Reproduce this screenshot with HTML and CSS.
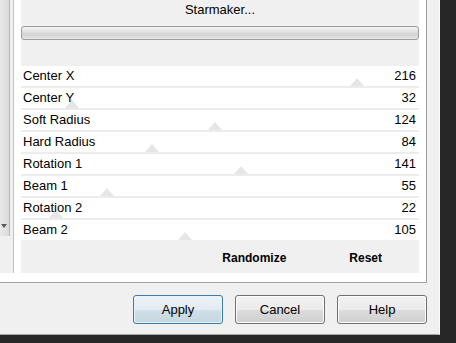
FILE: index.html
```html
<!DOCTYPE html>
<html lang="en">
<head>
    <meta charset="UTF-8">
    <meta name="viewport" content="width=device-width, initial-scale=1.0">
    <title>Starmaker</title>
    <link rel="stylesheet" href="styles.css">
</head>
<body>
    <div class="dialog">
        <div class="group">
            <div class="side">
                <div class="scrollbar"><span class="arrow"></span></div>
            </div>
            <div class="panel">
                <div class="head">
                    <div class="title">Starmaker...</div>
                    <div class="bar"></div>
                </div>
                <ul class="rows">
                    <li class="row" style="--v: 216"><span>Center X</span><span>216</span><i class="thumb"></i></li>
                    <li class="row" style="--v: 32"><span>Center Y</span><span>32</span><i class="thumb"></i></li>
                    <li class="row" style="--v: 124"><span>Soft Radius</span><span>124</span><i class="thumb"></i></li>
                    <li class="row" style="--v: 84"><span>Hard Radius</span><span>84</span><i class="thumb"></i></li>
                    <li class="row" style="--v: 141"><span>Rotation 1</span><span>141</span><i class="thumb"></i></li>
                    <li class="row" style="--v: 55"><span>Beam 1</span><span>55</span><i class="thumb"></i></li>
                    <li class="row" style="--v: 22"><span>Rotation 2</span><span>22</span><i class="thumb"></i></li>
                    <li class="row" style="--v: 105"><span>Beam 2</span><span>105</span><i class="thumb"></i></li>
                </ul>
                <div class="tools">
                    <span>Randomize</span>
                    <span>Reset</span>
                </div>
            </div>
        </div>
        <div class="buttons">
            <button class="btn default">Apply</button>
            <button class="btn">Cancel</button>
            <button class="btn">Help</button>
        </div>
    </div>
</body>
</html>
```

FILE: styles.css
```css
body {
    margin: 0;
    padding: 0;
    background-color: #272727;
    font-family: "Liberation Sans", Arial, sans-serif;
    font-size: 13px;
    color: #000;
}
.dialog {
    width: 439px;
    height: 334px;
    background: #f0f0f0;
    border-right: 1px solid #fafafa;
    border-bottom: 1px solid #a8a8a8;
}
.group {
    display: flex;
    width: 426px;
    height: 273px;
    padding-bottom: 9px;
    background: #fff;
    border-right: 1px solid #a0a0a0;
    border-bottom: 1px solid #a0a0a0;
}
.side {
    width: 13px;
    height: 273px;
    background: #f0f0f0;
    border-right: 1px solid #c2c2c2;
}
.scrollbar {
    position: relative;
    width: 9px;
    height: 236px;
    background: linear-gradient(to right, #e9e9e9, #dadada);
    border-right: 1px solid #b8b8b8;
}
.arrow {
    position: absolute;
    left: 1px;
    bottom: 8px;
    width: 0;
    height: 0;
    border-left: 3px solid transparent;
    border-right: 3px solid transparent;
    border-top: 4px solid #5a5a5a;
}
.panel {
    width: 398px;
    margin-left: 7px;
    display: flex;
    flex-direction: column;
}
.head {
    height: 66px;
    background: #f0f0f0;
}
.title {
    line-height: 20px;
    text-align: center;
}
.bar {
    box-sizing: border-box;
    height: 14px;
    margin-top: 6px;
    border: 1px solid #9c9c9c;
    border-radius: 3px;
    background: linear-gradient(#f4f4f4, #dedede 45%, #d2d2d2 60%, #e6e6e6);
}
.rows {
    list-style: none;
    margin: 0;
    padding: 0;
    display: flex;
    flex-direction: column;
    gap: 2px;
    background: #ececec;
}
.row {
    position: relative;
    height: 20px;
    line-height: 20px;
    padding: 0 3px 0 2px;
    display: flex;
    justify-content: space-between;
    background: #fff;
}
.row span {
    position: relative;
    z-index: 1;
}
.thumb {
    position: absolute;
    bottom: 0;
    left: calc(1px + var(--v) / 255 * 396px - 7px);
    width: 0;
    height: 0;
    border-left: 7px solid transparent;
    border-right: 7px solid transparent;
    border-bottom: 8px solid #e6e6e6;
}
.tools {
    height: 33px;
    background: #f0f0f0;
    display: flex;
    justify-content: flex-end;
    align-items: center;
    gap: 63px;
    padding: 2px 37px 0 0;
    box-sizing: border-box;
    font-size: 12px;
    font-weight: bold;
}
.buttons {
    display: flex;
    justify-content: flex-end;
    gap: 12px;
    padding: 12px 12px 0 0;
}
.btn {
    width: 90px;
    height: 29px;
    padding: 0;
    font-family: "Liberation Sans", Arial, sans-serif;
    font-size: 13px;
    color: #000;
    border: 1px solid #707070;
    border-radius: 3px;
    background: linear-gradient(#f2f2f2, #ebebeb 50%, #dddddd 50%, #cfcfcf);
    box-shadow: inset 0 0 0 1px #fcfcfc;
}
.btn.default {
    border-color: #3d7bad;
    background: linear-gradient(#edf3f7, #e1ebf1 50%, #d1e0e8 50%, #c4d6e0);
    box-shadow: inset 0 0 0 1px #e8f4fb;
}
```
